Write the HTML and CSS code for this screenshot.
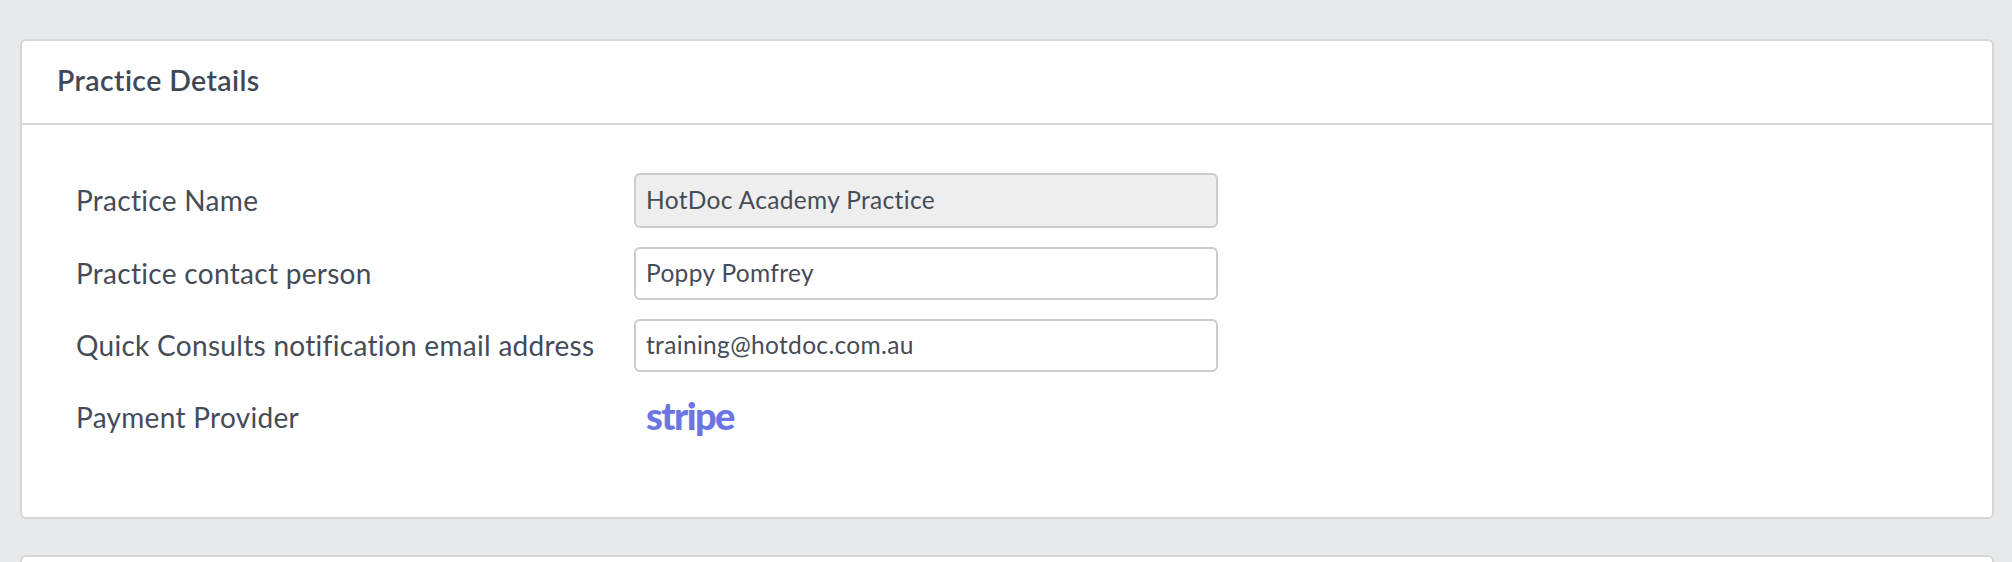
FILE: index.html
```html
<!DOCTYPE html>
<html lang="en">
<head>
<meta charset="utf-8">
<title>Practice Details</title>
<link rel="stylesheet" href="styles.css">
</head>
<body>
<main class="page">
  <section class="card">
    <header class="card-header"><h2 class="card-title">Practice Details</h2></header>
    <div class="card-body">
      <div class="row">
        <label class="label">Practice Name</label>
        <div class="field field-disabled">HotDoc Academy Practice</div>
      </div>
      <div class="row">
        <label class="label">Practice contact person</label>
        <div class="field">Poppy Pomfrey</div>
      </div>
      <div class="row">
        <label class="label">Quick Consults notification email address</label>
        <div class="field">training@hotdoc.com.au</div>
      </div>
      <div class="row">
        <label class="label">Payment Provider</label>
        <div class="stripe">stripe</div>
      </div>
    </div>
  </section>
  <section class="card card-next"></section>
</main>
</body>
</html>
```
FILE: styles.css
```css
* { box-sizing: border-box; }
html, body { margin: 0; height: 100%; overflow: hidden; background: #e8e9eb; }
body { font-family: Lato, "Open Sans", sans-serif; color: #454b57; font-variant-ligatures: none; }
.page { padding: 39px 18px 0 20px; display: flex; flex-direction: column; gap: 36px; }
.card { background: #fff; border: 2px solid #d5d6d9; border-radius: 6px; }
.card-next { height: 60px; flex: none; }
.card-header { height: 84px; border-bottom: 2px solid #d5d6d9; display: flex; align-items: center; padding: 0 0 5px 35px; }
.card-title { margin: 0; font-size: 28.5px; font-weight: 600; letter-spacing: 0.4px; color: #414754; }
.card-body { padding: 48px 0 0 54px; height: 392px; display: flex; flex-direction: column; gap: 19px; }
.row { display: flex; align-items: center; height: 53px; }
.row:first-child { height: 55px; }
.label { width: 558px; flex: none; padding-bottom: 1px; font-size: 28px; letter-spacing: 0.3px; }
.field { width: 584px; height: 100%; padding: 0 0 3px 10px; display: flex; align-items: center; font-size: 24.5px; letter-spacing: 0.33px; background: #fff; border: 2px solid #cbcccf; border-radius: 6px; }
.field-disabled { background: #eeeeee; }
.stripe { padding: 0 0 6px 12px; font-size: 38px; line-height: 1; font-weight: 900; letter-spacing: -1.6px; color: #6b76e3; }
```
